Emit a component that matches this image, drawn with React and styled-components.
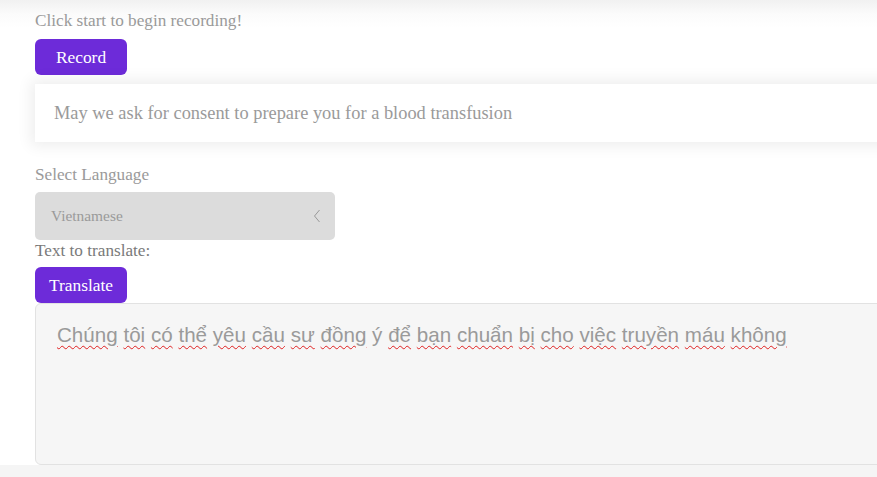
import * as React from 'react'
import styled, { createGlobalStyle } from 'styled-components'

const GlobalStyle = createGlobalStyle`
  html, body {
    margin: 0;
    padding: 0;
    background: #f5f5f5;
    overflow: hidden;
  }
`

const Page = styled.div`
  width: 1000px;
  height: 465px;
  box-sizing: border-box;
  padding: 10px 0 0 35px;
  background: linear-gradient(#f1f1f1, #fbfbfb 14px, #fff 28px);
  display: flex;
  flex-direction: column;
  align-items: flex-start;
  font-family: "Liberation Serif", "Times New Roman", serif;
  font-size: 17.2px;
`
const Hint = styled.div`
  color: ${props => props.dark ? '#7a7a7a' : '#9a9a9a'};
  line-height: 21px;
  margin-bottom: ${props => props.gap || 0}px;
`
const Button = styled.button`
  width: 92px;
  height: 36px;
  border: 0;
  border-radius: 6px;
  background: #6d2bd9;
  color: #fff;
  font-family: inherit;
  font-size: 17.4px;
  padding: 0;
  cursor: pointer;
`
const Transcript = styled.div`
  align-self: stretch;
  margin-top: 9px;
  height: 58px;
  background: #fff;
  box-shadow: 0 0 14px 4px rgba(0, 0, 0, 0.07);
  display: flex;
  align-items: center;
  padding-left: 19px;
  color: #9a9a9a;
  font-size: 18.4px;
`
const Label = styled.div`
  margin-top: 22px;
  color: #9a9a9a;
  line-height: 21px;
`
const Select = styled.div`
  margin-top: 7px;
  width: 300px;
  height: 48px;
  box-sizing: border-box;
  background: #dcdcdc;
  border-radius: 5px;
  display: flex;
  align-items: center;
  justify-content: space-between;
  padding: 0 14px 0 16px;
  color: #9a9a9a;
  font-size: 15.4px;
`
const TranslateArea = styled.div`
  align-self: stretch;
  height: 162px;
  box-sizing: border-box;
  background: #f6f6f6;
  border: 1px solid #e2e2e2;
  border-radius: 6px;
  padding: 19px 21px;
  font-family: "Liberation Sans", Arial, sans-serif;
  font-size: 20.6px;
  color: #9a9a9a;
`
const Word = styled.span`
  text-decoration: ${props => props.ok ? 'none' : 'underline wavy #e02020'};
  text-decoration-thickness: 1px;
  text-underline-offset: 3px;
`

const translated = 'Chúng tôi có thể yêu cầu sư đồng ý để bạn chuẩn bị cho việc truyền máu không'

const App = () => (
  <Page>
    <GlobalStyle />
    <Hint gap={8}>Click start to begin recording!</Hint>
    <Button>Record</Button>
    <Transcript>May we ask for consent to prepare you for a blood transfusion</Transcript>
    <Label>Select Language</Label>
    <Select>
      <span>Vietnamese</span>
      <svg width="8" height="14" viewBox="0 0 8 14">
        <path d="M6.5 1 L1.5 7 L6.5 13" fill="none" stroke="#999" strokeWidth="1" />
      </svg>
    </Select>
    <Hint dark gap={6}>Text to translate:</Hint>
    <Button>Translate</Button>
    <TranslateArea>
      {translated.split(' ').map((w, i) => (
        <React.Fragment key={i}>
          {i > 0 && ' '}
          <Word ok={w === 'ý'}>{w}</Word>
        </React.Fragment>
      ))}
    </TranslateArea>
  </Page>
)

export default App
